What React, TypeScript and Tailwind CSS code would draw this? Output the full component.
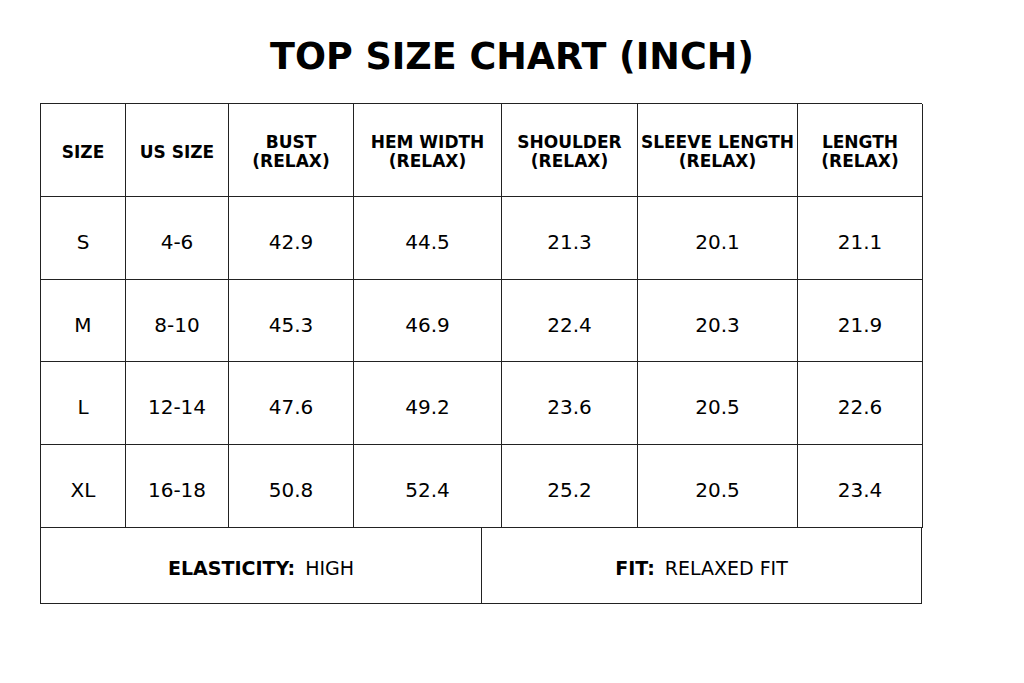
const font = { fontFamily: '"DejaVu Sans", "Liberation Sans", sans-serif' };

const headers = [
  ["SIZE"],
  ["US SIZE"],
  ["BUST", "(RELAX)"],
  ["HEM WIDTH", "(RELAX)"],
  ["SHOULDER", "(RELAX)"],
  ["SLEEVE LENGTH", "(RELAX)"],
  ["LENGTH", "(RELAX)"],
];

const rows = [
  { h: "h-[83px]", cells: ["S", "4-6", "42.9", "44.5", "21.3", "20.1", "21.1"] },
  { h: "h-[82px]", cells: ["M", "8-10", "45.3", "46.9", "22.4", "20.3", "21.9"] },
  { h: "h-[83px]", cells: ["L", "12-14", "47.6", "49.2", "23.6", "20.5", "22.6"] },
  { h: "h-[83px]", cells: ["XL", "16-18", "50.8", "52.4", "25.2", "20.5", "23.4"] },
];

export default function App() {
  return (
    <div className="w-[1024px] h-[683px] bg-white text-black" style={font}>
      <div className="h-[103px] pt-[35px] text-center">
        <h1 className="text-[36.5px] leading-[43px] font-bold">TOP SIZE CHART (INCH)</h1>
      </div>

      <div className="ml-[40px] w-[882px]">
        <div className="grid grid-cols-[85px_103px_125px_148px_136px_160px_125px] border-l border-t border-[#222]">
          {headers.map((h, i) => (
            <div
              key={i}
              className="h-[93px] border-r border-b border-[#222] flex flex-col items-center justify-center text-[17px] leading-[19px] font-bold whitespace-nowrap pt-[4px]"
            >
              {h.map((line) => (
                <span key={line}>{line}</span>
              ))}
            </div>
          ))}
          {rows.map((row) =>
            row.cells.map((cell, i) => (
              <div
                key={row.cells[0] + i}
                className={`${row.h} border-r border-b border-[#222] flex items-center justify-center text-[20px] pt-[8px]`}
              >
                {cell}
              </div>
            ))
          )}
        </div>

        <div className="grid grid-cols-[441px_440px] w-[881px] border-l border-[#222]">
          <div className="h-[76px] border-r border-b border-[#222] flex items-center justify-center text-[19px] gap-[10px] pt-[5px]">
            <span className="font-bold">ELASTICITY:</span>
            <span>HIGH</span>
          </div>
          <div className="h-[76px] border-r border-b border-[#222] flex items-center justify-center text-[19px] gap-[10px] pt-[5px]">
            <span className="font-bold">FIT:</span>
            <span>RELAXED FIT</span>
          </div>
        </div>
      </div>
    </div>
  );
}
